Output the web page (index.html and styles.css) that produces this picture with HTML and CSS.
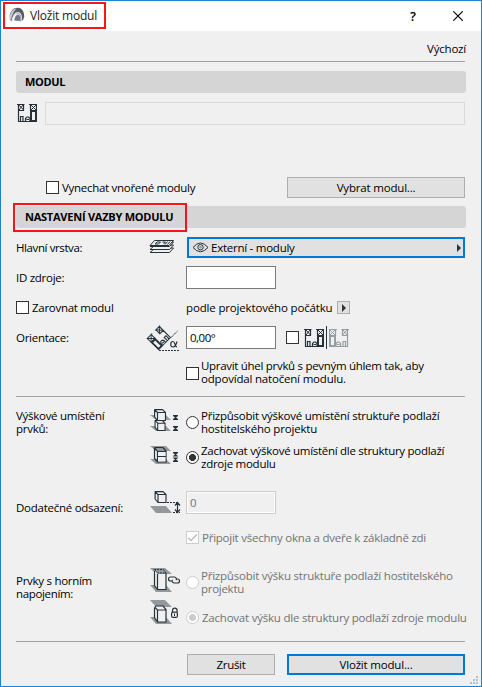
FILE: index.html
```html
<!DOCTYPE html>
<html lang="cs">
<head>
<meta charset="utf-8">
<title>Vložit modul</title>
<link rel="stylesheet" href="styles.css">
</head>
<body>
<svg class="defs" width="0" height="0">
  <defs>
    <symbol id="house" viewBox="0 0 20 18">
      <g fill="none" stroke="currentColor">
        <path stroke-width="1.200" d="M0 .5h7.500M12 .5h8M1.500 0v18M1 17.500h19M1.500 6.500h5V0M3.500 17v-4.500h2.500V17M8.500 17v-2.500l1.500-1.500h1.500l1.500 1.500V17M9.500 15.500h2.500"/>
        <path stroke-width="1" d="M2 1l4.500 5M6 1L2 6M14 1l5 5M19 1l-5 5"/>
        <path stroke-width="1.200" d="M13.500 0v6.500h6V0"/>
        <path stroke-width="2" d="M14 7v10h5V7z"/>
      </g>
    </symbol>
    <symbol id="cube" viewBox="0 0 12 12">
      <path d="M.6.6L3.500 3.500v8L.6 8zM.6.6h7.900l3 2.900v8h-8v-8h8" fill="#f0f0f0" stroke="#26323a" stroke-width="1.150" stroke-linejoin="round"/>
    </symbol>
  </defs>
</svg>
<div class="dialog">
  <header class="titlebar">
    <div class="title-mark">
      <svg class="logo" width="16" height="16" viewBox="0 0 16 16">
        <path d="M1 13C-.5 5 4 .5 9 .8c4.500.4 6.300 4 6.200 9.200L14 13l-3 1.500C12 9 11 6.500 8.500 6.500S4 10 2.500 14.500z" fill="#5c5c68"/>
        <path d="M.6 12C.8 5 4 2 7.500 1.500 4.500 4 2.800 8 2 13.500z" fill="#c9c9d3"/>
        <path d="M3 14.500C4 8.500 6 5.500 9.200 5.700c3 .3 3.800 4 2.800 8.300" fill="none" stroke="#e4e4ea" stroke-width="1.200"/>
        <path d="M5 13.500c1-4 2-6 4-6s2.500 3 1.800 6.500z" fill="#77778a"/>
      </svg>
      <span class="title">Vložit modul</span>
    </div>
    <span class="help">?</span>
    <svg class="close" width="10" height="10" viewBox="0 0 10 10"><path d="M.3.3l9.400 9.400M9.700.3L.3 9.700" stroke="#000" stroke-width="1.150"/></svg>
  </header>

  <main class="content">
    <div class="row preset"><span class="t-preset">Výchozí</span></div>
    <hr>
    <h2 class="section"><span class="t-modul">MODUL</span></h2>
    <div class="row module-row">
      <svg class="house" width="20" height="18"><use href="#house"/></svg>
      <div class="module-name"></div>
    </div>
    <div class="row choose-row">
      <label class="option nested"><i class="check"></i><span class="t-nested">Vynechat vnořené moduly</span></label>
      <button class="button wide"><span class="t-choose">Vybrat modul...</span></button>
    </div>
    <h2 class="section link-section"><span class="t-link">NASTAVENÍ VAZBY MODULU</span></h2>

    <div class="row layer-row">
      <span class="label t-layer">Hlavní vrstva:</span>
      <span class="icon"><svg width="27" height="18" viewBox="0 0 27 18">
        <g fill="#f0f0f0" stroke="#26323a" stroke-width="1">
          <path d="M1 13.500h19.500l4-4.500H6z"/><path d="M1 10.500h19.500l4-4.500H6z"/><path d="M1 7.500h19.500l4-4.500H6z"/>
          <path d="M5.500 1.500h19l-4.500 5H1z"/>
          <path d="M8 3h3.500L9.500 5H6zM13.500 3h3l-2 2M18.500 2.500L16 5.500M21 2.500L18.500 5.500" fill="none"/>
        </g></svg></span>
      <button class="dropdown">
        <svg width="17" height="11" viewBox="0 0 17 11"><path d="M1 5.500Q8.500-3.500 16 5.500 8.500 14 1 5.500z" fill="none" stroke="#26323a" stroke-width="1"/><circle cx="8.500" cy="5.300" r="2.700" fill="none" stroke="#26323a"/><circle cx="8.500" cy="5.300" r=".8" fill="none" stroke="#26323a" stroke-width=".5"/></svg>
        <span class="t-external">Externí - moduly</span>
        <i class="arrow"></i>
      </button>
    </div>

    <div class="row id-row"><span class="label t-id">ID zdroje:</span><span class="icon"></span><div class="field"></div></div>

    <div class="row align-row">
      <label class="option align"><i class="check"></i><span class="t-align">Zarovnat modul</span></label>
      <span class="t-origin">podle projektového počátku</span>
      <button class="popup"><i class="arrow"></i></button>
    </div>

    <div class="row orient-row">
      <span class="label t-orient">Orientace:</span>
      <span class="icon orient-icon"><svg width="36" height="27" viewBox="0 0 36 27">
        <g fill="none" stroke="#26323a">
          <g transform="translate(13.500 25.500) rotate(-45) scale(.95) translate(20 -18) scale(-1 1)" color="#26323a"><use href="#house" width="20" height="18"/></g>
          <path d="M26 12.500L32.500 6" stroke-dasharray="3 1"/>
          <path d="M14 25.500h21" stroke-dasharray="2 1"/>
          <path d="M32 16.500c-1 4-2.500 5.500-4 5.500-3 0-3-5.500 0-5.500 2.200 0 1.800 5.500 4 5.500" stroke-width="1.150"/>
        </g></svg></span>
      <div class="field angle"><span class="t-angle">0,00°</span></div>
      <i class="check mirror-check"></i>
      <div class="mirror"><svg class="house" width="20" height="18"><use href="#house"/></svg><i class="axis"></i><svg class="house flipped" width="20" height="18"><use href="#house"/></svg></div>
    </div>

    <div class="row adjust-row">
      <label class="option two"><i class="check"></i><span class="raised"><span class="t-adjust">Upravit úhel prvků s pevným úhlem tak, aby</span><br><span class="t-adjust2">odpovídal natočení modulu.</span></span></label>
    </div>
    <hr>

    <div class="row height-row">
      <span class="label"><span class="t-height">Výškové umístění</span><br><span class="t-height2">prvků:</span></span>
      <span class="icon"><svg width="28" height="23" viewBox="0 0 28 23">
        <path d="M0 6h16l5 5H6zM0 17h16l5 5H6z" fill="#92989b"/>
        <use href="#cube" x="4" y="0" width="12" height="12"/><use href="#cube" x="4" y="11" width="12" height="11"/>
        <path d="M23 6h5v1l-2 1.500L28 10v1h-5v-1l2-1.500L23 7zM23 17h5v1l-2 1.500 2 1.500v1h-5v-1l2-1.500L23 18z" fill="#26323a"/>
      </svg></span>
      <label class="option two"><i class="radio"></i><span><span class="t-fit">Přizpůsobit výškové umístění struktuře podlaží</span><br><span class="t-host">hostitelského projektu</span></span></label>
    </div>
    <div class="row keep-row">
      <span class="label"></span>
      <span class="icon"><svg width="28" height="18" viewBox="0 0 28 18">
        <path d="M0 0h16l5 5H6zM0 13h16l5 5H6z" fill="#92989b"/>
        <path d="M4.500 1.500v11l3 3.500h8.500V5.500H7.500v10.500M4.500 1.500h8.500l3 3.500M4.500 1.500l3 4M8 10.500h8" fill="none" stroke="#26323a" stroke-width="1.200"/>
        <path d="M8 6h7.500v4H8zM8 11h7.500v4.500H8z" fill="#f0f0f0"/>
        <path d="M23 6h5v1l-2 1.500 2 1.500v.5h-5V10l2-1.500L23 7zM23 11.500h5v.5l-2 1.500 2 1.500v1h-5v-1l2-1.500-2-1.500z" fill="#26323a"/>
      </svg></span>
      <label class="option two"><i class="radio on"></i><span><span class="t-keep">Zachovat výškové umístění dle struktury podlaží</span><br><span class="t-source">zdroje modulu</span></span></label>
    </div>
    <div class="row offset-row">
      <span class="label t-offset">Dodatečné odsazení:</span>
      <span class="icon"><svg width="31" height="23" viewBox="0 0 31 23">
        <path d="M0 15h16l6 7H6z" fill="#92989b"/><use href="#cube" x="4" y="0" width="13" height="12"/>
        <path d="M17 11.500h10M23 21.500h7" stroke="#26323a" stroke-dasharray="2 1"/><path d="M27.500 12v9M25 14.500l2.500-3 2.500 3M25 18.500l2.500 3 2.500-3" fill="none" stroke="#26323a" stroke-width="1.200"/>
      </svg></span>
      <div class="field disabled"><span>0</span></div>
    </div>
    <div class="row connect-row disabled-text">
      <label class="option"><i class="check off"><svg width="11" height="11" viewBox="0 0 11 11"><path d="M1.200 5.700l2.800 2.800 5.800-6" fill="none" stroke="#b8b8b8" stroke-width="1.300"/></svg></i><span class="t-connect">Připojit všechny okna a dveře k základně zdi</span></label>
    </div>
    <div class="row top-row">
      <span class="label toplabel"><span class="t-top">Prvky s horním</span><br><span class="t-top2">napojením:</span></span>
      <span class="icon"><svg width="31" height="24" viewBox="0 0 31 24">
        <path d="M0 0h15l7 6H6zM0 17h16l6 7H6z" fill="#92989b"/>
        <path d="M5 3v15l3 4V6z" fill="#f0f0f0"/><path d="M8 6h8v15H8z" fill="#f0f0f0"/>
        <path d="M4.500 5v12.500l3 4h8.500V5M7.500 6v15.500" fill="none" stroke="#26323a" stroke-width="1.200"/>
        <path d="M4.500 5V1.500h9l2.500 3.500H7.500L4.500 1.500" fill="none" stroke="#26323a" stroke-dasharray="2 1"/>
        <path d="M22 13h-1.500a2 2 0 0 1 0-4h4a2 2 0 0 1 1.500 3.200M26.500 11h1a2 2 0 0 1 0 4h-3.500a2 2 0 0 1-1.500-3.200" fill="none" stroke="#26323a" stroke-width="1.150"/>
      </svg></span>
      <label class="option two disabled-text"><i class="radio off"></i><span><span class="t-fittop">Přizpůsobit výšku struktuře podlaží hostitelského</span><br><span class="t-project">projektu</span></span></label>
    </div>
    <div class="row lock-row">
      <span class="label"></span>
      <span class="icon"><svg width="28" height="24" viewBox="0 0 28 24">
        <path d="M0 0h15l7 7H6zM0 17h16l6 7H6z" fill="#92989b"/>
        <path d="M4.500 8v9.500l3 4.500h8.500V9.500l-3-3.500H6zM4.500 7l3 3h8.500M7.500 10v12" fill="#f0f0f0" stroke="#26323a" stroke-width="1.200"/>
        <path d="M22.500 12v-1.500a2.300 2.300 0 0 1 4.600 0V12" fill="none" stroke="#26323a" stroke-width="1.200"/><rect x="21.600" y="12.100" width="5.800" height="5.300" rx="1.500" fill="none" stroke="#26323a" stroke-width="1.200"/><path d="M24.500 13.500v2.500" stroke="#26323a"/>
      </svg></span>
      <label class="option disabled-text"><i class="radio off on"></i><span class="t-keeptop">Zachovat výšku dle struktury podlaží zdroje modulu</span></label>
    </div>
    <hr>
    <footer class="actions">
      <button class="button cancel"><span class="t-cancel">Zrušit</span></button>
      <button class="button wide primary"><span class="t-insert">Vložit modul...</span></button>
    </footer>
  </main>
  <svg class="grip" width="8" height="8" viewBox="0 0 8 8" fill="#bdbdbd"><path d="M6 0h2v2H6zM3 3h2v2H3zM6 3h2v2H6zM0 6h2v2H0zM3 6h2v2H3zM6 6h2v2H6z"/></svg>
</div>
</body>
</html>
```
FILE: styles.css
```css
*, *::before { box-sizing: border-box; }
body { margin: 0; }
.defs { position: absolute; }

.dialog {
  position: relative;
  width: 482px;
  height: 687px;
  border: 1px solid #1883d7;
  background: #f0f0f0;
  color: #000;
  font: 11.5px/13px "Open Sans", "Noto Sans", sans-serif;
  letter-spacing: -0.28px;
  white-space: nowrap;
  overflow: hidden;
}

.titlebar {
  display: flex;
  align-items: center;
  height: 30px;
  background: #fff;
}
.title-mark {
  display: flex;
  align-items: center;
  gap: 5px;
  width: 103px;
  height: 27px;
  margin: 0 0 2px 2px;
  padding-left: 4px;
  border: 2px solid #f81418;
}
.title { font-size: 12px; letter-spacing: -0.2px; color: #222; }
.help { margin-left: 304px; font-size: 13px; font-weight: 600; }
.close { margin: 0 0 1px 37px; }

.content { padding: 0 16px 0 15px; }
hr { height: 1px; margin: 0; border: 0; background: #a0a0a0; }
.row { display: flex; align-items: flex-start; }
.preset { height: 30px; justify-content: flex-end; padding-top: 11px; margin-right: -1px; }

.section {
  display: flex;
  align-items: center;
  height: 22px;
  margin: 9px -1px 0 0;
  padding: 0 0 1px 9px;
  border-radius: 3px;
  background: #d5d5d5;
  font-size: 11px;
  font-weight: 700;
}
.module-row { height: 84px; padding-top: 9px; }
.house { display: block; color: #26323a; }
.module-row .house { margin: 2px 8px 0 1px; }
.module-name { width: 420px; height: 23px; border: 1px solid #dadada; }
.choose-row { height: 21px; justify-content: space-between; }
.nested { margin: 4px 0 0 30px; }

.option { display: flex; align-items: center; gap: 3px; height: 13px; }
.option.two { height: 26px; gap: 2px; }
.raised { padding-bottom: 2px; }
.check, .radio {
  display: block;
  flex: none;
  width: 13px;
  height: 13px;
  border: 1px solid #333;
  background: #fff;
}
.check svg { display: block; }
.check.off, .radio.off { border-color: #ccc; }
.radio { border-radius: 50%; }
.radio.on { background: radial-gradient(circle at center, #333 3.2px, #fff 3.8px); }
.radio.off.on { background: radial-gradient(circle at center, #ccc 3.2px, #fff 3.8px); }
.disabled-text { color: #737373; }

.button {
  height: 21px;
  margin: 0;
  padding: 0;
  border: 1px solid #adadad;
  background: #e1e1e1;
  color: inherit;
  font: inherit;
  letter-spacing: inherit;
}
.wide { width: 178px; }
.primary { border: 2px solid #0078d7; }

.link-section { margin-top: 8px; }
.link-section::before {
  content: "";
  position: absolute;
  left: 12px;
  top: 202px;
  width: 174px;
  height: 29px;
  border: 2px solid #f81418;
}

.label { width: 134px; flex: none; }
.icon { width: 36px; flex: none; }
.icon svg { display: block; }

.layer-row { height: 38px; padding-top: 9px; }
.layer-row .label { padding-top: 4px; }
.layer-row .icon { width: 37px; }
.layer-row .icon svg { margin: 2px 0 0 -1px; }
.dropdown {
  display: flex;
  align-items: center;
  width: 278px;
  height: 21px;
  padding: 0 3px 0 2px;
  border: 2px solid #0078d7;
  background: #e1e1e1;
  color: inherit;
  font: inherit;
  letter-spacing: inherit;
}
.dropdown svg { margin: 0 2px 0 1px; }
.arrow {
  display: block;
  border: solid transparent;
  border-width: 4px 0 4px 4px;
  border-left-color: #333;
}
.dropdown .arrow { margin-left: auto; margin-right: -1px; }

.field {
  display: flex;
  align-items: center;
  width: 90px;
  height: 23px;
  padding-left: 3px;
  border: 1px solid #7a7a7a;
  background: #fff;
}
.field.disabled { border-color: #ccc; background: #f0f0f0; color: #737373; box-shadow: inset 0 0 0 1px #fff; }
.id-row { height: 35px; }
.id-row .label { padding-top: 5px; }

.align-row { height: 25px; }
.align { width: 170px; }
.align-row .t-origin { width: 151px; }
.popup {
  display: flex;
  align-items: center;
  justify-content: center;
  width: 13px;
  height: 13px;
  padding: 0;
  border: 1px solid #adadad;
  background: #e1e1e1;
}

.orient-row { height: 34px; }
.orient-row .label { padding-top: 5px; width: 129px; }
.orient-icon { width: 41px; margin-top: -1px; }
.mirror-check { margin: 5px 5px 0 10px; }
.mirror { display: flex; align-items: center; height: 23px; }
.mirror .axis { width: 1px; height: 23px; margin: 0 2px; background: #26323a; }
.mirror .flipped { transform: scaleX(-1); color: #969da1; }

.adjust-row { height: 36px; padding-left: 170px; }
.height-row { height: 48px; padding-top: 12px; }
.keep-row { height: 46px; }
.keep-row .icon { margin-top: 1px; }
.keep-row .option { margin-top: -1px; }
.offset-row { height: 40px; }
.offset-row .label { padding-top: 10px; }
.connect-row { height: 37px; padding-left: 170px; }
.top-row { height: 32px; }
.top-row .option { margin-top: 1px; }
.toplabel { padding-top: 6px; }
.lock-row { height: 41px; }
.lock-row .option { margin-top: 11px; }

.actions { display: flex; justify-content: flex-end; gap: 12px; padding-top: 12px; }
.cancel { width: 88px; }
.grip { position: absolute; right: 3px; bottom: 2px; }

.t-modul { letter-spacing: -0.35px; }
.t-link { letter-spacing: -0.24px; }
.t-preset { letter-spacing: -0.2px; }
.t-choose, .t-insert { letter-spacing: -0.18px; }
.t-layer { letter-spacing: -0.4px; }
.t-nested { letter-spacing: -0.29px; }
.t-external { letter-spacing: -0.25px; }
.t-origin { letter-spacing: -0.16px; }
.t-angle { letter-spacing: -0.5px; }
.t-adjust { letter-spacing: -0.3px; }
.t-adjust2 { letter-spacing: -0.19px; }
.t-fit { letter-spacing: -0.24px; }
.t-host { letter-spacing: -0.18px; }
.t-source { letter-spacing: -0.26px; }
.t-offset { letter-spacing: -0.26px; }
.t-connect { letter-spacing: -0.24px; }
.t-top2 { letter-spacing: -0.34px; }
.t-fittop, .t-keeptop { letter-spacing: -0.22px; }
```
